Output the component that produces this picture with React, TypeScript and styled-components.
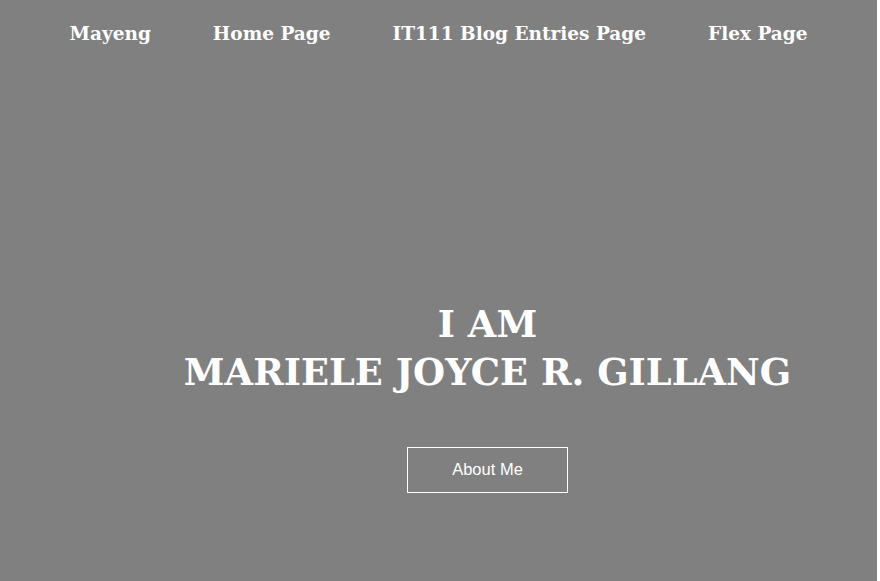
import React from "react";
import styled, { createGlobalStyle } from "styled-components";

const Global = createGlobalStyle`
  html, body { margin: 0; padding: 0; background: #ffffff; }
  body { font-family: "DejaVu Serif", "Liberation Serif", serif; }
`;

const Page = styled.div`
  width: calc(100vw - 3px);
  height: 581px;
  background: #808080;
  color: #ffffff;
  display: flex;
  flex-direction: column;
  overflow: hidden;
`;

const Nav = styled.nav`
  display: flex;
  justify-content: center;
  align-items: center;
  gap: 62px;
  padding-top: 19px;
  height: 28px;
`;

const NavLink = styled.a`
  font-family: "DejaVu Serif", "Liberation Serif", serif;
  font-weight: bold;
  font-size: 18.5px;
  color: #ffffff;
  text-decoration: none;
  white-space: nowrap;
`;

const Hero = styled.section`
  display: flex;
  flex-direction: column;
  align-items: center;
  padding-left: 98px;
  padding-top: 253px;
`;

const Title = styled.h1`
  margin: 0;
  font-family: "DejaVu Serif", "Liberation Serif", serif;
  font-weight: bold;
  font-size: 36.8px;
  line-height: 48px;
  text-align: center;
  color: #ffffff;
`;

const Button = styled.a`
  margin-top: 51px;
  width: 159px;
  height: 44px;
  box-sizing: content-box;
  border: 1px solid #ffffff;
  display: flex;
  align-items: center;
  justify-content: center;
  padding-bottom: 0;
  font-family: "Liberation Sans", Arial, sans-serif;
  font-size: 16.5px;
  line-height: 40px;
  color: #ffffff;
  text-decoration: none;
`;

const ButtonLabel = styled.span`
  margin-bottom: 3px;
`;

export default function App() {
  return (
    <>
      <Global />
      <Page>
        <Nav>
          <NavLink href="#">Mayeng</NavLink>
          <NavLink href="#">Home Page</NavLink>
          <NavLink href="#">IT111 Blog Entries Page</NavLink>
          <NavLink href="#">Flex Page</NavLink>
        </Nav>
        <Hero>
          <Title>
            I AM
            <br />
            MARIELE JOYCE R. GILLANG
          </Title>
          <Button href="#">
            <ButtonLabel>About Me</ButtonLabel>
          </Button>
        </Hero>
      </Page>
    </>
  );
}
